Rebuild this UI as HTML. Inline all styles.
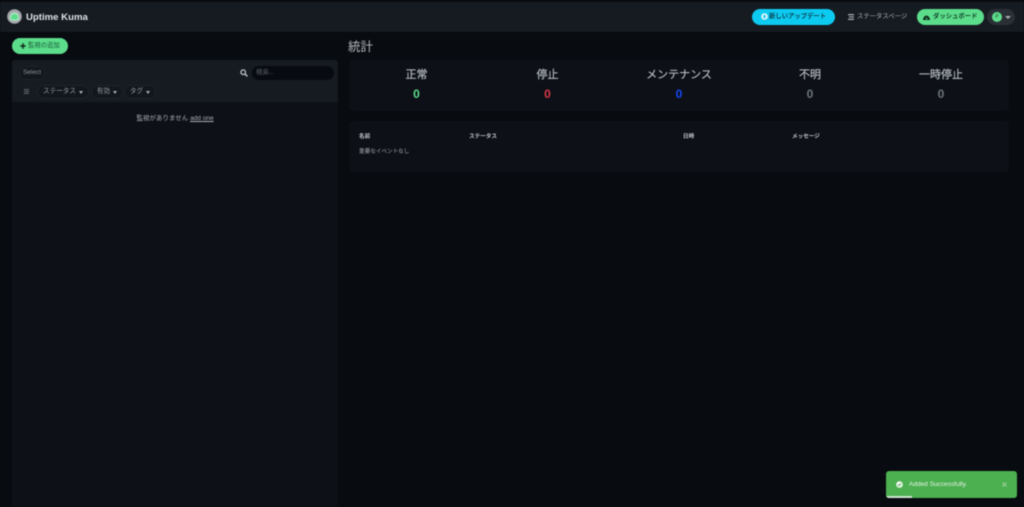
<!DOCTYPE html>
<html lang="ja">
<head>
<meta charset="utf-8">
<style>
*{box-sizing:border-box;margin:0;padding:0}
html,body{width:1024px;height:507px;overflow:hidden;background:#080b0f;font-family:"Liberation Sans","Noto Sans CJK JP",sans-serif;color:#c9ced4}
.a{position:absolute;white-space:nowrap}
#root{position:relative;width:1024px;height:507px;filter:blur(.5px)}
.topline{left:0;top:0;width:1024px;height:2px;background:#0a0c0f}
.header{left:0;top:2px;width:1024px;height:30px;background:#161b22}
.pill{border-radius:9px}
.card{background:#0d1117;border-radius:3px}
.stat-t{font-size:11px;line-height:16px;text-align:center;color:#b4b9bf;transform:translateX(-50%);-webkit-text-stroke:.2px #b4b9bf}
.stat-n{font-size:12px;font-weight:700;line-height:14px;transform:translateX(-50%)}
.th{font-size:5.6px;font-weight:700;line-height:8px;color:#c4c8cd}
.fbtn{height:14px;border-radius:7px;background:#12171e;border:1px solid #1d222a;font-size:6.6px;line-height:12px;color:#9299a0;display:flex;align-items:center;justify-content:center;padding-bottom:1px}
.car{display:inline-block;margin-left:3px;margin-top:1px;width:0;height:0;border-left:2.5px solid transparent;border-right:2.5px solid transparent;border-top:3px solid #a9aeb4}
.t7{font-size:6.35px;line-height:10px}
</style>
</head>
<body>
<div id="root">
<div class="a topline"></div>
<div class="a header"></div>

<!-- logo -->
<svg class="a" style="left:7px;top:9px" width="15" height="15" viewBox="0 0 15 15">
<circle cx="7.500" cy="7.500" r="7.300" fill="#a3a8aa"/>
<path d="M2.800 9C2.800 5.900 4.900 3.500 7.500 3.500S12.200 5.900 12.200 9C12.200 11 10.800 11.800 7.500 11.800S2.800 11 2.800 9Z" fill="#b9e8cb"/>
<path d="M3.900 8.900C3.900 6.500 5.500 4.700 7.500 4.700S11.100 6.500 11.100 8.900C11.100 10.300 10 10.800 7.500 10.800S3.900 10.300 3.900 8.900Z" fill="#5cdd8b"/>
</svg>
<div class="a" style="left:26px;top:11px;font-size:9.600px;line-height:13px;font-weight:700;color:#dfe2e5">Uptime Kuma</div>

<!-- header right -->
<div class="a pill" style="left:752px;top:9px;width:83px;height:16px;background:#0dcaf0"></div>
<svg class="a" style="left:761px;top:13px" width="7" height="7" viewBox="0 0 7 7"><circle cx="3.500" cy="3.500" r="3.300" fill="#e8f6fb"/><path d="M3.500 1.500 5.400 3.600H4.300V5.400H2.700V3.600H1.600Z" fill="#0dcaf0"/></svg>
<div class="a t7" style="left:769px;top:12px;color:#0d4355;font-weight:700">新しいアップデート</div>
<svg class="a" style="left:848px;top:14px" width="6" height="6" viewBox="0 0 6 6"><path d="M0 .7H6M1 3H6M0 5.300H6" stroke="#b9bdc2" stroke-width="1.100"/></svg>
<div class="a t7" style="left:857px;top:12px;color:#a8adb3">ステータスページ</div>
<div class="a pill" style="left:917px;top:9px;width:67px;height:16px;background:#5cdd8b"></div>
<svg class="a" style="left:923px;top:13px" width="7" height="7" viewBox="0 0 7 7"><path d="M0 7A3.500 4.500 0 0 1 7 7Z" fill="#10301e"/><circle cx="3.500" cy="5.500" r=".8" fill="#5cdd8b"/></svg>
<div class="a t7" style="left:933px;top:12px;color:#14442a;font-weight:700">ダッシュボード</div>
<div class="a" style="left:987px;top:9px;width:28px;height:16px;border-radius:8px;background:#2a2f35"></div>
<div class="a" style="left:992px;top:12px;width:10px;height:10px;border-radius:50%;background:#5cdd8b;color:#1c4a30;font-size:5px;line-height:10px;text-align:center">P</div>
<div class="a" style="left:1005px;top:16px;width:0;height:0;border-left:3px solid transparent;border-right:3px solid transparent;border-top:3px solid #a9aeb4"></div>

<!-- add button -->
<div class="a pill" style="left:12px;top:38px;width:56px;height:16px;background:#5cdd8b"></div>
<svg class="a" style="left:20px;top:43px" width="6" height="6" viewBox="0 0 6 6"><path d="M3 .3V5.700M.3 3H5.700" stroke="#0f2c1b" stroke-width="1.500"/></svg>
<div class="a t7" style="left:28px;top:41px;color:#1a5a36">監視の追加</div>

<!-- left panel -->
<div class="a card" style="left:12px;top:60px;width:326px;height:447px"></div>
<div class="a" style="left:12px;top:60px;width:326px;height:42px;background:#161b22;border-radius:3px 3px 0 0"></div>
<div class="a fbtn" style="left:19px;top:66px;width:26px;font-size:6.500px;color:#8c9197">Select</div>
<svg class="a" style="left:240px;top:69px" width="8" height="8" viewBox="0 0 8 8"><circle cx="3.200" cy="3.200" r="2.300" fill="none" stroke="#c4c8cd" stroke-width="1.200"/><path d="M5 5 7.400 7.400" stroke="#c4c8cd" stroke-width="1.400"/></svg>
<div class="a" style="left:252px;top:66px;width:82px;height:14px;border-radius:7px;background:#070a10;padding-left:4px;font-size:6.500px;line-height:14px;color:#596068">検索...</div>
<svg class="a" style="left:24px;top:89px" width="5" height="5" viewBox="0 0 5 5"><path d="M0 .6H5M0 2.500H5M0 4.400H5" stroke="#7d8288" stroke-width=".8"/></svg>
<div class="a fbtn" style="left:37px;top:85px;width:52px">ステータス<i class="car"></i></div>
<div class="a fbtn" style="left:91px;top:85px;width:32px">有効<i class="car"></i></div>
<div class="a fbtn" style="left:124px;top:85px;width:32px">タグ<i class="car"></i></div>
<div class="a" style="left:12px;top:114px;width:326px;text-align:center;font-size:6.500px;line-height:10px;color:#a8adb3">監視がありません <span style="text-decoration:underline">add one</span></div>

<!-- right -->
<div class="a" style="left:348px;top:38px;font-size:12.500px;line-height:18px;color:#b7bcc1">統計</div>
<div class="a card" style="left:349px;top:60px;width:660px;height:51px"></div>
<div class="a stat-t" style="left:416.500px;top:67px">正常</div>
<div class="a stat-t" style="left:547.500px;top:67px">停止</div>
<div class="a stat-t" style="left:679px;top:67px">メンテナンス</div>
<div class="a stat-t" style="left:810px;top:67px">不明</div>
<div class="a stat-t" style="left:941px;top:67px">一時停止</div>
<div class="a stat-n" style="left:416.500px;top:87px;color:#5cdd8b">0</div>
<div class="a stat-n" style="left:547.500px;top:87px;color:#dc3545">0</div>
<div class="a stat-n" style="left:679px;top:87px;color:#1747f5">0</div>
<div class="a stat-n" style="left:810px;top:87px;color:#6c757d">0</div>
<div class="a stat-n" style="left:941px;top:87px;color:#6c757d">0</div>

<div class="a card" style="left:349px;top:121px;width:660px;height:51px"></div>
<div class="a th" style="left:359px;top:132.500px">名前</div>
<div class="a th" style="left:469px;top:132.500px">ステータス</div>
<div class="a th" style="left:683px;top:132.500px">日時</div>
<div class="a th" style="left:792px;top:132.500px">メッセージ</div>
<div class="a" style="left:359px;top:147.500px;font-size:5.600px;line-height:8px;color:#a8adb3">重要なイベントなし</div>

<!-- toast -->
<div class="a" style="left:886px;top:471px;width:131px;height:27px;background:#4caf50;border-radius:3px;overflow:hidden">
<div class="a" style="left:0;bottom:0;width:26px;height:2px;background:#cfe8d0"></div>
</div>
<svg class="a" style="left:896px;top:481px" width="7" height="7" viewBox="0 0 7 7"><circle cx="3.500" cy="3.500" r="3.300" fill="#f2f8f2"/><path d="M1.900 3.600 3.100 4.700 5.200 2.400" fill="none" stroke="#4caf50" stroke-width="1"/></svg>
<div class="a" style="left:909px;top:480px;font-size:6.500px;line-height:9px;color:#e6f3e6">Added Successfully.</div>
<svg class="a" style="left:1002px;top:482px" width="5" height="5" viewBox="0 0 5 5"><path d="M.5 .5 4.500 4.500M4.500 .5 .5 4.500" stroke="#9ed3a0" stroke-width="1"/></svg>
</div>
</body>
</html>
